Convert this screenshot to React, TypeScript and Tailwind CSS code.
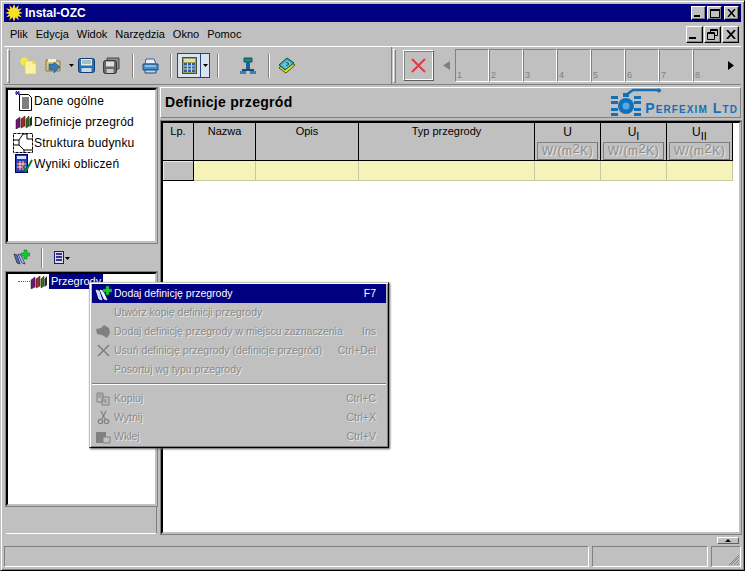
import type { ReactNode } from "react";

const menuItems = ["Plik", "Edycja", "Widok", "Narzędzia", "Okno", "Pomoc"];
const slots = ["1", "2", "3", "4", "5", "6", "7", "8"];

function TitleButton({ children, wide }: { children: ReactNode; wide?: boolean }) {
  return (
    <div className={`flex items-center justify-center border border-t-white border-l-white border-r-black border-b-black bg-[#c0c0c0] shadow-[inset_-1px_-1px_0_#808080] ${wide ? "h-[17px] w-[17px]" : "h-[14px] w-[15px]"}`}>
      {children}
    </div>
  );
}

function Separator({ className }: { className: string }) {
  return <div className={`h-[24px] w-[2px] border-l border-l-[#808080] border-r border-r-white ${className}`} />;
}

function NewIcon() {
  return (
    <svg width="17" height="18" viewBox="0 0 17 18">
      <circle cx="4.500" cy="4.500" r="4" fill="#f8e840" />
      <path d="M5 4h8l3 3v10H5z" fill="#fbf2a0" stroke="#d8c860" strokeWidth="0.6" />
      <path d="M12 3l4 4h-4z" fill="#f4d860" />
    </svg>
  );
}

function OpenIcon() {
  return (
    <svg width="17" height="17" viewBox="0 0 17 17">
      <path d="M1 3h5l1 1h8v10H1z" fill="#d8c878" stroke="#8a7a40" />
      <path d="M3 2h8v3H3z" fill="#f0f0e0" />
      <path d="M4 7h5V5l6 5-6 6v-3H4z" fill="#3a78b8" stroke="#1a4880" strokeWidth="0.5" />
    </svg>
  );
}

function SaveIcon({ tone }: { tone: "blue" | "gray" }) {
  if (tone === "blue") {
    return (
      <svg width="17" height="17" viewBox="0 0 17 17">
        <rect x="0.5" y="1.500" width="16" height="14" rx="2" fill="#2870b0" stroke="#103c70" />
        <rect x="3" y="2" width="11" height="6.500" fill="#e8e8e0" />
        <path d="M4 4h9M4 6h9" stroke="#7090a8" />
        <rect x="3.500" y="11" width="10" height="4" fill="#c8d8e8" />
      </svg>
    );
  }
  return (
    <svg width="17" height="17" viewBox="0 0 17 17">
      <path d="M4 1h12v11H4z" fill="#8c8c8c" stroke="#484848" />
      <rect x="0.5" y="3.500" width="13" height="13" rx="2" fill="#686868" stroke="#383838" />
      <rect x="3" y="4.500" width="8" height="5" fill="#e0e0d8" />
      <rect x="3.500" y="12" width="7" height="4" fill="#c0c8d0" />
    </svg>
  );
}

function PrinterIcon() {
  return (
    <svg width="17" height="16" viewBox="0 0 17 16">
      <path d="M4 1h8l2 5H3z" fill="#e8f0f8" stroke="#306898" />
      <path d="M1 6h15v6H1z" fill="#4a90c8" stroke="#1a5080" />
      <path d="M3 12h11v3H3z" fill="#b8d8f0" stroke="#1a5080" />
      <path d="M3 8h11" stroke="#cfe4f4" />
    </svg>
  );
}

function CalcIcon() {
  return (
    <svg width="15" height="17" viewBox="0 0 15 17">
      <rect x="0.5" y="0.5" width="14" height="16" fill="#a0a060" stroke="#505030" />
      <rect x="2" y="2" width="11" height="3" fill="#d8e0c0" />
      <path d="M2 6h11v9H2z" fill="#3060a0" />
      <path d="M5.500 6v9M9.500 6v9M2 9h11M2 12h11" stroke="#c8d8f0" />
    </svg>
  );
}

function DoorIcon() {
  return (
    <svg width="18" height="18" viewBox="0 0 18 18">
      <path d="M5 1h8v4H5z" fill="#208878" stroke="#105048" />
      <path d="M7 5h4v7H7z" fill="#1860a0" />
      <path d="M3 12h12v2H3z" fill="#284868" />
      <path d="M1 14h6v3H1zM11 14h6v3h-6z" fill="#3080c0" />
    </svg>
  );
}

function BookIcon() {
  return (
    <svg width="18" height="18" viewBox="0 0 18 18">
      <path d="M1 11 10 3l7 5-9 8z" fill="#e8e020" stroke="#4a5010" />
      <path d="M1 8 9 1l7 5-9 7z" fill="#38a0a8" stroke="#104858" />
      <path d="M3 8 9 3l5 3.500-6 5z" fill="#60c8d8" />
      <path d="M8 5l3 2-3 2" stroke="#104858" fill="none" />
    </svg>
  );
}

function DocumentIcon() {
  return (
    <svg width="20" height="20" viewBox="0 0 20 20">
      <path d="M3 0l3 4M6 0 3 4M2 2h5" stroke="#000080" strokeWidth="1" />
      <path d="M6.500 3.500h9l3 3v13h-12z" fill="#fff" stroke="#000" />
      <path d="M9 7h7M9 9h7M9 11h7M9 13h7M9 15h7M9 17h7" stroke="#000" />
    </svg>
  );
}

function PartitionsIcon({ size = 18 }: { size?: number }) {
  return (
    <svg width={size} height={size - 4} viewBox="0 0 18 14">
      <path d="M1 5 5 2v10l-4 2z" fill="#701878" stroke="#280830" strokeWidth="0.5" />
      <path d="M6 4 10 1v10l-4 2z" fill="#983028" stroke="#301008" strokeWidth="0.5" />
      <path d="M11 4l3-3v10l-3 2z" fill="#307020" stroke="#102808" strokeWidth="0.5" />
      <path d="M14.500 4 17 1v9l-2.500 2z" fill="#282828" />
    </svg>
  );
}

function StructureIcon() {
  return (
    <svg width="20" height="20" viewBox="0 0 20 20" fill="none" stroke="#000">
      <path d="M0.500 0.500h19v19h-19z" strokeDasharray="3 1" />
      <path d="M0 7h6l4-6h4v5h6M6 7v5l5 5v3M11 17h9M6 12H0" />
    </svg>
  );
}

function ResultsIcon() {
  return (
    <svg width="20" height="20" viewBox="0 0 20 20">
      <rect x="2.500" y="0.500" width="12" height="18" fill="#2040c0" stroke="#000060" />
      <rect x="4" y="2" width="9" height="3" fill="#d8e0ff" />
      <path d="M4 7h9v9H4z" fill="#a02040" />
      <path d="M7 7v9M10 7v9M4 10h9M4 13h9" stroke="#e8e8f8" />
      <path d="M10 12l3 5 6-11" stroke="#108030" strokeWidth="2" fill="none" />
    </svg>
  );
}

function AddPartitionIcon({ light }: { light?: boolean }) {
  return (
    <svg width="17" height="17" viewBox="0 0 17 17">
      <path d="M1 5l3 1 3 9-3-1z" fill={light ? "#c8d8f8" : "#5070b8"} stroke={light ? "#fff" : "#202060"} strokeWidth="0.7" />
      <path d="M5 5l3 1 4 9-3-1z" fill={light ? "#f0f0ff" : "#b0c0e8"} stroke={light ? "#fff" : "#202060"} strokeWidth="0.7" />
      <path d="M11 1h3v3h3v3h-3v3h-3V7H8V4h3z" fill="#10d030" stroke="#087020" strokeWidth="0.5" />
    </svg>
  );
}

function ListMenuIcon() {
  return (
    <svg width="16" height="14" viewBox="0 0 16 14">
      <rect x="0.500" y="0.500" width="9" height="12" fill="#d8d8e8" stroke="#202060" />
      <path d="M2 3h6M2 6h6M2 9h6" stroke="#000080" strokeWidth="1.400" />
      <path d="M11 6h5l-2.500 3z" fill="#000" />
    </svg>
  );
}

function MenuRow({ label, shortcut, icon, active }: { label: string; shortcut?: string; icon?: ReactNode; active?: boolean }) {
  return (
    <div className={`flex h-[19px] items-center ${active ? "bg-[#000080] text-white" : "text-[#8a8a8a] [text-shadow:1px_1px_0_#e8e8e8]"}`}>
      <div className="flex w-[22px] shrink-0 items-center justify-center">{icon}</div>
      <span className="flex-1 whitespace-nowrap">{label}</span>
      {shortcut && <span className="mr-[10px] whitespace-nowrap">{shortcut}</span>}
    </div>
  );
}

function ContextMenu() {
  return (
    <div className="absolute left-[88px] top-[281px] w-[300px] border border-t-[#c0c0c0] border-l-[#c0c0c0] border-r-black border-b-black bg-[#c0c0c0] p-px text-[10.5px] shadow-[inset_1px_1px_0_#fff,inset_-1px_-1px_0_#808080,1px_1px_2px_#555]">
      <div className="px-px">
        <MenuRow active icon={<AddPartitionIcon light />} label="Dodaj definicję przegrody" shortcut="F7" />
        <MenuRow label="Utwórz kopię definicji przegrody" />
        <MenuRow
          icon={(
            <svg width="16" height="15" viewBox="0 0 16 15">
              <path d="M1 5l5-1 3-3 5 3 1 5-3 5-5-3-5-1z" fill="#808080" />
            </svg>
          )}
          label="Dodaj definicję przegrody w miejscu zaznaczenia"
          shortcut="Ins"
        />
        <MenuRow
          icon={(
            <svg width="15" height="15" viewBox="0 0 15 15">
              <path d="M2 2l11 11M13 2 2 13" stroke="#808080" strokeWidth="1.600" />
            </svg>
          )}
          label="Usuń definicję przegrody (definicje przegród)"
          shortcut="Ctrl+Del"
        />
        <MenuRow label="Posortuj wg typu przegrody" />
        <div className="my-[4px] h-[2px] border-t border-t-[#808080] border-b border-b-white" />
        <MenuRow
          icon={(
            <svg width="15" height="14" viewBox="0 0 15 14" fill="none" stroke="#808080">
              <path d="M1 1h6v9H1zM6 5h7v8H6zM8 8h3M8 10h3M2 3h4M2 5h3" />
            </svg>
          )}
          label="Kopiuj"
          shortcut="Ctrl+C"
        />
        <MenuRow
          icon={(
            <svg width="13" height="15" viewBox="0 0 13 15" fill="none" stroke="#808080" strokeWidth="1.200">
              <path d="M4 1l4 8M9 1 5 9" />
              <circle cx="3.500" cy="11.500" r="2.200" />
              <circle cx="9.500" cy="11.500" r="2.200" />
            </svg>
          )}
          label="Wytnij"
          shortcut="Ctrl+X"
        />
        <MenuRow
          icon={(
            <svg width="16" height="14" viewBox="0 0 16 14">
              <path d="M1 2h10v11H1z" fill="#808080" />
              <path d="M8 7h7v6H8z" fill="#c0c0c0" stroke="#808080" />
            </svg>
          )}
          label="Wklej"
          shortcut="Ctrl+V"
        />
      </div>
    </div>
  );
}

function UnitBox() {
  return (
    <div className="mx-[2px] mt-[1px] flex h-[18px] items-center justify-center overflow-hidden border border-t-[#808080] border-l-[#808080] border-r-[#707070] border-b-[#707070] text-[12px] leading-none tracking-[0.5px] text-[#8c8c8c] [text-shadow:1px_1px_0_#e8e8e8]">
      W/(m<span className="relative -top-[3px] text-[13px]">2</span>K)
    </div>
  );
}

function UnitHeader({ sub }: { sub?: string }) {
  return (
    <div className="flex flex-col border-r border-b border-r-black border-b-black bg-[#c0c0c0] pt-px">
      <div className="flex h-[17px] items-start justify-center text-[12px] leading-[16px] text-black">
        U{sub && <span className="mt-[5px] text-[11px] leading-[14px]">{sub}</span>}
      </div>
      <UnitBox />
    </div>
  );
}

function HeaderCell({ label }: { label: string }) {
  return (
    <div className="border-r border-b border-r-black border-b-black bg-[#c0c0c0] pt-[2px] text-center text-[11px] leading-[13px] text-black">
      {label}
    </div>
  );
}

function PerfeximLogo() {
  return (
    <div className="flex items-end">
      <svg className="overflow-visible" width="30" height="29" viewBox="0 0 30 29">
        <path d="M15 7 22 2h26" stroke="#1070b8" strokeWidth="2.500" fill="none" />
        <circle cx="48" cy="2.500" r="2" fill="#1070b8" />
        <path d="M12 5h6v4h-6z" fill="#1070b8" />
        <circle cx="15" cy="18" r="8" fill="#1070b8" />
        <circle cx="15" cy="18" r="3.500" fill="#5aa8e4" />
        <path d="M0 8h7v3H0zM0 13h7v3H0zM0 20h7v3H0zM0 25h7v3H0zM23 8h7v3h-7zM23 13h7v3h-7zM23 20h7v3h-7zM23 25h7v3h-7z" fill="#1070b8" />
      </svg>
      <span className="mb-[2px] ml-[4px] text-[14px] font-bold leading-none tracking-[1.1px] text-[#1070b8] [font-variant:small-caps]">
        Perfexim Ltd
      </span>
    </div>
  );
}

function LeftList() {
  const rows: { label: string; icon: ReactNode }[] = [
    { label: "Dane ogólne", icon: <DocumentIcon /> },
    { label: "Definicje przegród", icon: <PartitionsIcon /> },
    { label: "Struktura budynku", icon: <StructureIcon /> },
    { label: "Wyniki obliczeń", icon: <ResultsIcon /> },
  ];
  return (
    <div className="h-[155px] shrink-0 border-2 border-t-black border-l-black border-r-[#c0c0c0] border-b-[#c0c0c0] bg-white shadow-[0_0_0_1px_#808080]">
      {rows.map((row) => (
        <div className="flex h-[21px] items-center text-[12px] tracking-[0.18px] text-black" key={row.label}>
          <div className="flex w-[26px] shrink-0 justify-end pr-px">{row.icon}</div>
          <span>{row.label}</span>
        </div>
      ))}
    </div>
  );
}

export default function App() {
  return (
    <div className="relative flex h-[571px] w-[745px] flex-col overflow-hidden border border-t-[#c0c0c0] border-l-[#c0c0c0] border-r-black border-b-black bg-[#c0c0c0] p-[3px] font-['Liberation_Sans',sans-serif] shadow-[inset_1px_1px_0_#fff,inset_-1px_-1px_0_#808080]">
      <div className="flex h-[18px] shrink-0 items-center bg-[#000080] pl-px pr-[2px]">
        <svg width="18" height="18" viewBox="0 0 17 17">
          <path d="M8.500 0l1.500 4 3-3-1 4 4-1-3 3 4 1.500-4 1 3 3-4-1 1 4-3-3-1.500 4-1.500-4-3 3 1-4-4 1 3-3-4-1 4-1.500-3-3 4 1-1-4 3 3z" fill="#f8e020" />
        </svg>
        <span className="ml-[2px] text-[12px] font-bold text-white">Instal-OZC</span>
        <div className="ml-auto flex">
          <TitleButton><div className="mt-[6px] mr-[3px] h-[2px] w-[6px] bg-black" /></TitleButton>
          <div className="ml-px"><TitleButton><div className="h-[9px] w-[10px] border border-t-2 border-black" /></TitleButton></div>
          <div className="ml-[2px]">
            <TitleButton>
              <svg width="9" height="8" viewBox="0 0 9 8"><path d="M1 0l7 8M8 0 1 8" stroke="#000" strokeWidth="1.500" /></svg>
            </TitleButton>
          </div>
        </div>
      </div>

      <div className="flex h-[24px] shrink-0 items-center pl-[6px] text-[11px] text-black">
        <div className="flex gap-[8px]">
          {menuItems.map((item) => <span key={item}>{item}</span>)}
        </div>
        <div className="ml-auto mr-[2px] flex gap-px">
          <TitleButton wide><div className="mt-[7px] mr-[4px] h-[2px] w-[7px] bg-black" /></TitleButton>
          <TitleButton wide>
            <svg width="11" height="11" viewBox="0 0 11 11" fill="none" stroke="#000">
              <path d="M3.500 3V.5h7v6H8" />
              <path d="M3.500 1.500h7" />
              <path d="M.5 3.500h7v7h-7zM.5 4.500h7" />
            </svg>
          </TitleButton>
          <TitleButton wide>
            <svg width="10" height="9" viewBox="0 0 10 9"><path d="M1 0l8 9M9 0 1 9" stroke="#000" strokeWidth="1.800" /></svg>
          </TitleButton>
        </div>
      </div>

      <div className="flex h-[39px] shrink-0 border-t border-t-white border-b border-b-[#808080]">
        <div className="flex w-[388px] shrink-0 items-center border-r border-r-[#808080] pl-[3px]">
          <div className="h-[34px] w-[3px] border border-t-white border-l-white border-r-[#808080] border-b-[#808080]" />
          <div className="ml-[10px]"><NewIcon /></div>
          <div className="ml-[8px]"><OpenIcon /></div>
          <svg className="ml-[7px]" width="5" height="3" viewBox="0 0 5 3"><path d="M0 0h5L2.500 3z" fill="#000" /></svg>
          <div className="ml-[4px]"><SaveIcon tone="blue" /></div>
          <div className="ml-[8px]"><SaveIcon tone="gray" /></div>
          <Separator className="ml-[12px]" />
          <div className="ml-[8px]"><PrinterIcon /></div>
          <Separator className="ml-[11px]" />
          <div className="ml-[5px] flex h-[25px] w-[33px] border border-[#204880] bg-[#d8e4f0]">
            <div className="flex w-[23px] items-center justify-center border-r border-r-[#204880]"><CalcIcon /></div>
            <div className="flex flex-1 items-center justify-center">
              <svg width="5" height="3" viewBox="0 0 5 3"><path d="M0 0h5L2.500 3z" fill="#000" /></svg>
            </div>
          </div>
          <Separator className="ml-[7px]" />
          <div className="ml-[20px]"><DoorIcon /></div>
          <Separator className="ml-[11px]" />
          <div className="ml-[8px]"><BookIcon /></div>
        </div>
        <div className="flex flex-1 items-center pl-px">
          <div className="h-[34px] w-[3px] border border-t-white border-l-white border-r-[#808080] border-b-[#808080]" />
          <div className="ml-[7px] flex h-[31px] w-[31px] items-center justify-center border border-t-white border-l-white border-r-[#606060] border-b-[#606060] shadow-[inset_1px_1px_0_#808080,inset_-1px_-1px_0_#fff]">
            <svg width="15" height="15" viewBox="0 0 15 15"><path d="M1 1l13 13M14 1 1 14" stroke="#e03848" strokeWidth="2" /></svg>
          </div>
          <svg className="ml-[9px]" width="7" height="9" viewBox="0 0 7 9"><path d="M7 0v9L0 4.500z" fill="#808080" /></svg>
          <div className="ml-[5px] flex w-[265px] overflow-hidden">
            {slots.map((slot) => (
              <div className="flex h-[33px] w-[34px] shrink-0 items-end border border-t-[#808080] border-l-[#808080] border-r-white border-b-white pl-px text-[9px] leading-[12px] text-[#808080]" key={slot}>
                {slot}
              </div>
            ))}
          </div>
          <svg className="ml-[8px]" width="6" height="9" viewBox="0 0 6 9"><path d="M0 0v9l6-4.500z" fill="#000" /></svg>
        </div>
      </div>

      <div className="flex min-h-0 flex-1 gap-[3px] pl-[2px] pt-[3px]">
        <div className="flex w-[151px] shrink-0 flex-col">
          <LeftList />
          <div className="flex h-[29px] shrink-0 items-center">
            <div className="ml-[7px]"><AddPartitionIcon /></div>
            <Separator className="ml-[11px] !h-[20px]" />
            <div className="ml-[11px]"><ListMenuIcon /></div>
          </div>
          <div className="min-h-0 flex-1 border-2 border-t-black border-l-black border-r-[#c0c0c0] border-b-[#c0c0c0] bg-white shadow-[0_0_0_1px_#808080]">
            <div className="flex h-[15px] items-center pl-[10px]">
              <div className="w-[12px] border-t border-dotted border-t-[#606060]" />
              <PartitionsIcon />
              <span className="ml-px bg-[#000080] px-[2px] text-[11px] leading-[15px] text-white">Przegrody</span>
            </div>
          </div>
          <div className="h-[28px] shrink-0 border-r border-b border-r-[#808080] border-b-white" />
        </div>

        <div className="-mt-px flex min-w-0 flex-1 flex-col">
          <div className="flex h-[31px] shrink-0 items-center justify-between border border-t-white border-l-white border-r-[#808080] border-b-[#808080] pl-[4px] pr-[2px]">
            <span className="text-[14px] font-bold tracking-[0.3px] text-black">Definicje przegród</span>
            <PerfeximLogo />
          </div>
          <div className="ml-px mt-[3px] min-h-0 flex-1 border-2 border-t-black border-l-black border-r-[#c0c0c0] border-b-[#c0c0c0] bg-white shadow-[0_0_0_1px_#808080]">
            <div className="grid grid-cols-[31px_62px_103px_176px_66px_66px_66px] grid-rows-[38px_20px]">
              <HeaderCell label="Lp." />
              <HeaderCell label="Nazwa" />
              <HeaderCell label="Opis" />
              <HeaderCell label="Typ przegrody" />
              <UnitHeader />
              <UnitHeader sub="I" />
              <UnitHeader sub="II" />
              <div className="border-r border-b border-r-black border-b-black bg-[#c0c0c0] shadow-[inset_1px_1px_0_#e8e8e8]" />
              {[0, 1, 2, 3, 4, 5].map((cell) => (
                <div className="border-r border-b border-r-[#c8c8a0] border-b-[#c8c8a0] bg-[#f6f3b8]" key={cell} />
              ))}
            </div>
          </div>
        </div>
      </div>

      <div className="flex h-[12px] shrink-0 items-start justify-end pr-[2px] pt-[3px]">
        <div className="flex h-[7px] w-[22px] items-center justify-center border border-t-white border-l-white border-r-[#606060] border-b-[#606060]">
          <svg width="6" height="3" viewBox="0 0 6 3"><path d="M0 3h6L3 0z" fill="#000" /></svg>
        </div>
      </div>

      <div className="flex h-[21px] shrink-0 gap-[3px]">
        <div className="w-[585px] border border-t-[#808080] border-l-[#808080] border-r-white border-b-white" />
        <div className="w-[116px] border border-t-[#808080] border-l-[#808080] border-r-white border-b-white" />
        <div className="relative flex-1 border border-t-[#808080] border-l-[#808080] border-r-white border-b-white">
          <svg className="absolute bottom-0 right-0" width="12" height="12" viewBox="0 0 12 12" stroke="#808080">
            <path d="M11 1 1 11M11 3 3 11M11 6 6 11M11 9 9 11" />
          </svg>
        </div>
      </div>

      <ContextMenu />
    </div>
  );
}
